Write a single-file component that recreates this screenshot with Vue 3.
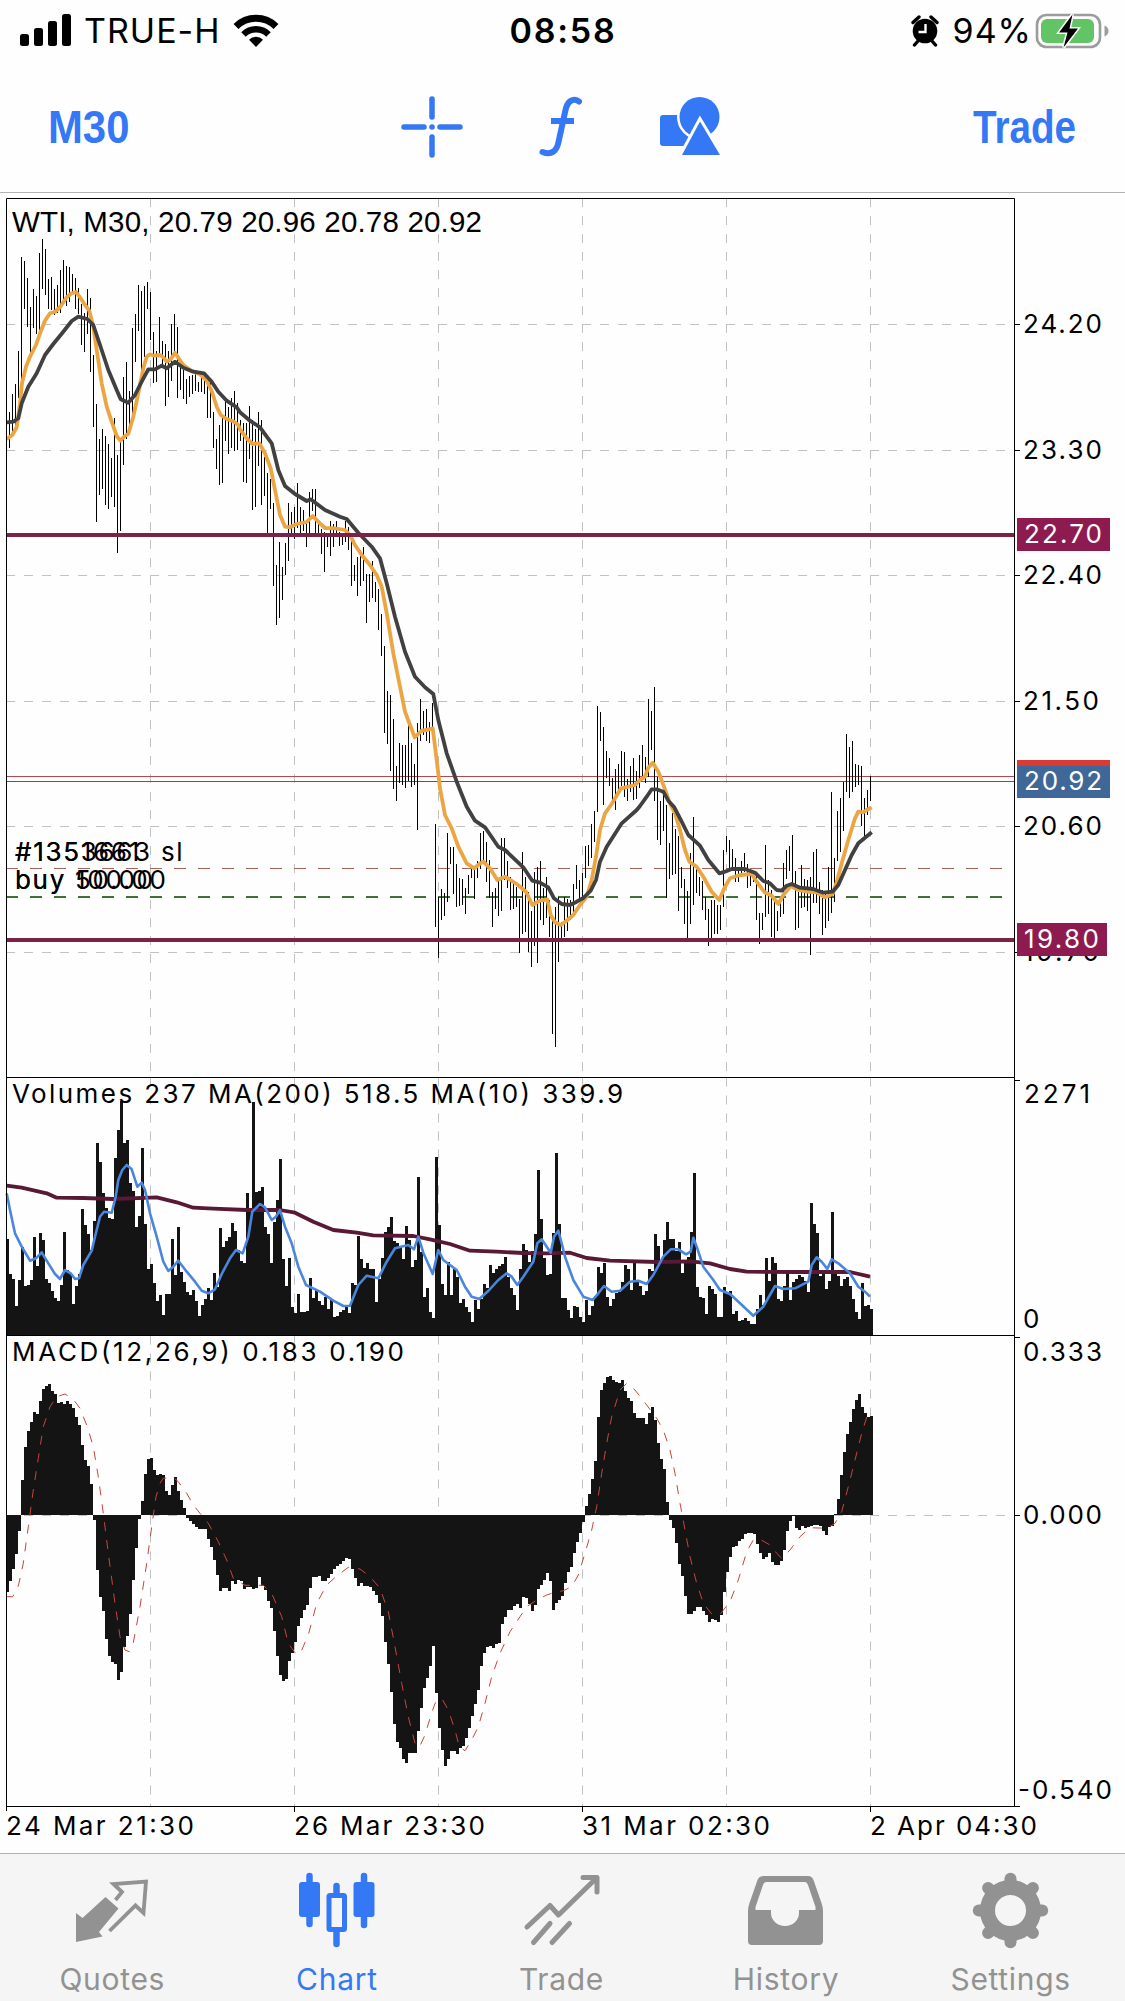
<template>
  <div class="screen">
    <!-- Status bar -->
    <div class="status-bar">
      <div class="status-left">
        <svg class="signal" width="52" height="34" viewBox="0 0 52 34">
          <rect x="0" y="20" width="9" height="12" rx="2.5" />
          <rect x="14" y="14" width="9" height="18" rx="2.5" />
          <rect x="28" y="7" width="9" height="25" rx="2.5" />
          <rect x="42" y="0" width="9" height="32" rx="2.5" />
        </svg>
        <span class="carrier">TRUE-H</span>
        <svg class="wifi" width="46" height="34" viewBox="0 0 46 34">
          <path d="M3 12.5a28.5 28.5 0 0 1 40 0" stroke-width="7" />
          <path d="M10.5 20.5a17.8 17.8 0 0 1 25 0" stroke-width="6.5" />
          <path class="solid" d="M23 33l-7-7.3a10 10 0 0 1 14 0z" />
        </svg>
      </div>
      <span class="clock">08:58</span>
      <div class="status-right">
        <svg class="alarm" width="28" height="32" viewBox="0 0 28 32">
          <circle cx="14" cy="16" r="12.3" />
          <path d="M2 7.5L8 2M26 7.5L20 2M7 26l-3.5 4M21 26l3.5 4" stroke="#000" stroke-width="3.4" stroke-linecap="round" />
          <path d="M14.5 9v8H7.5" fill="none" stroke="#fff" stroke-width="2.4" />
        </svg>
        <span class="percent">94%</span>
        <svg class="battery" width="74" height="36" viewBox="0 0 74 36">
          <rect x="2" y="2" width="63" height="32" rx="9.5" fill="none" stroke="#9c9c9c" stroke-width="2.6" />
          <rect x="6" y="6" width="53" height="24" rx="6" fill="#63c466" />
          <path d="M69.5 12.5v11q4-1.8 4-5.500t-4-5.500z" fill="#9c9c9c" />
          <path d="M37.500 1.500L24 19.500h8.500L28.500 34.500 43 15.500h-8.500z" fill="#000" stroke="#fff" stroke-width="3" paint-order="stroke" />
        </svg>
      </div>
    </div>

    <!-- Toolbar -->
    <div class="toolbar">
      <button class="tool-text period">M30</button>
      <div class="tools">
        <svg width="62" height="62" viewBox="0 0 62 62">
          <path d="M31 3v18M31 41v18M3 31h20M39 31h20M30.900 31h.2" fill="none" stroke="#3478f6" stroke-width="5.500" stroke-linecap="round" />
        </svg>
        <svg width="44" height="62" viewBox="0 0 44 62">
          <path d="M40 5.500C34 1.500 28.500 5 26.500 14L19.500 46C18 54 13 60 3.500 56" fill="none" stroke="#3478f6" stroke-width="6" stroke-linecap="round" />
          <path d="M12 25h23" stroke="#3478f6" stroke-width="6" />
        </svg>
        <svg width="62" height="62" viewBox="0 0 62 62">
          <rect x="1" y="19" width="33" height="31" rx="3" fill="#3478f6" />
          <circle cx="40.500" cy="21" r="20" fill="#3478f6" stroke="#fefefe" stroke-width="5" paint-order="stroke" />
          <path d="M41 25.500L61 59H23z" fill="#3478f6" stroke="#fefefe" stroke-width="6" paint-order="stroke" />
        </svg>
      </div>
      <button class="tool-text trade">Trade</button>
    </div>

    <!-- Chart: price, volumes and MACD windows -->
    <svg class="chart" width="1125" height="1660" viewBox="0 193 1125 1660">
      <g class="grid">
        <path v-for="y in gridY" :key="'h' + y" :d="`M6 ${y}.5H1014`" />
        <path v-for="x in gridX" :key="'v' + x" :d="`M${x}.5 198V1077M${x}.5 1077.500V1335M${x}.5 1335.500V1806`" />
        <path d="M6 1515.500H1014" />
      </g>

      <!-- price window -->
      <path class="level-ask" d="M6 776.500H1014" />
      <path class="level-bid" d="M6 781.500H1014" />
      <path class="level-sl" d="M6 868.500H1014" />
      <path class="level-order" d="M6 897H1014" />
      <path class="bars" :d="barPath" />
      <polyline class="ma-fast" :points="maFast" />
      <polyline class="ma-slow" :points="maSlow" />
      <path class="level" d="M6 535H1014M6 940H1014" />

      <!-- indicator windows -->
      <path class="columns" :d="volumePath" />
      <polyline class="vol-slow" :points="volSlow" />
      <polyline class="vol-fast" :points="volFast" />
      <path class="columns" :d="macdPath" />
      <polyline class="signal-line" :points="signal" />

      <path class="frame" d="M6.500 1811V198.500H1014.500V1806.500M6 1077.500H1014M6 1335.500H1014M6 1806.500H1020M1014 1080.500H1020M1014 1337.500H1020M1014 1515.500H1020" />
      <path v-for="y in gridY" :key="'t' + y" class="frame" :d="`M1014 ${y}.5H1020`" />
      <path v-for="x in [294, 582, 870]" :key="'d' + x" class="frame" :d="`M${x}.5 1806V1812`" />

      <text
        v-for="t in labels"
        :key="t.text + t.y"
        :class="t.cls"
        :x="t.x"
        :y="t.y"
        :textLength="t.w"
      >{{ t.text }}</text>

      <g v-for="t in tags" :key="t.text">
        <rect :x="1017" :y="t.top" :width="t.width" height="33" :fill="t.color" />
        <text class="tag" x="1024" :y="t.top + 25" :textLength="t.width - 15">{{ t.text }}</text>
      </g>
      <rect x="1017" y="760" width="93" height="6" fill="#d93a34" />
    </svg>

    <!-- Tab bar -->
    <div class="tab-bar">
      <div v-for="tab in tabs" :key="tab" class="tab" :class="{ active: tab === activeTab }" @click="activeTab = tab">
        <svg width="80" height="80" viewBox="0 0 80 80">
          <template v-if="tab === 'Quotes'">
            <path d="M43.500 30L50 22 41.500 14 74 11.500 71.500 43 63.500 35.500 37.500 61" fill="none" stroke="currentColor" stroke-width="3.800" />
            <path d="M33.500 27L46.500 38.500 27 62 30.500 66.500 4 72V43L10.500 48z" fill="currentColor" />
          </template>
          <template v-else-if="tab === 'Chart'">
            <path d="M12.500 6v48M67 6v49M39.500 16v8M39.500 62v12" fill="none" stroke="currentColor" stroke-width="6.500" stroke-linecap="round" />
            <rect x="2" y="12" width="21" height="35" rx="3" fill="currentColor" />
            <rect x="56.500" y="12" width="21" height="35" rx="3" fill="currentColor" />
            <rect x="32" y="25.500" width="15.500" height="34" rx="1" fill="none" stroke="currentColor" stroke-width="5" />
          </template>
          <template v-else-if="tab === 'Trade'">
            <path d="M6 57L29 35.500 37.500 45 75.500 8M62 7.500H76V22M29 53.500L12.500 72.500M48.500 53.500L31 72.500" fill="none" stroke="currentColor" stroke-width="5" stroke-linecap="round" stroke-linejoin="round" />
          </template>
          <template v-else-if="tab === 'History'">
            <path fill-rule="evenodd" d="M18 6H62Q66 6 67.500 10L75.500 33Q77 37 77 41V71Q77 75 73 75H6Q2 75 2 71V41Q2 37 3.500 33L11.500 10Q13 6 18 6zM20 12Q18 12 17 15L9.500 37V40H25V43a14 13 0 0 0 28 0V40H69.500V37L62 15Q61 12 59 12z" fill="currentColor" />
          </template>
          <template v-else>
            <circle cx="39.500" cy="40.500" r="23" fill="none" stroke="currentColor" stroke-width="15" />
            <path
              v-for="n in 8"
              :key="n"
              d="M39.500 12V8.800"
              :transform="`rotate(${n * 45} 39.500 40.500)`"
              stroke="currentColor"
              stroke-width="12"
              stroke-linecap="round"
            />
          </template>
        </svg>
        <span>{{ tab }}</span>
      </div>
    </div>
  </div>
</template>

<script setup>
import { ref } from 'vue';

const tabs = ['Quotes', 'Chart', 'Trade', 'History', 'Settings'];
const activeTab = ref('Chart');

const gridX = [150, 294, 438, 582, 726, 870];
const gridY = [324, 450, 575, 701, 826, 952];

const labels = [
  { text: 'WTI, M30, 20.79 20.96 20.78 20.92', x: 12, y: 231.5, w: 470, cls: 'title' },
  { text: '24.20', x: 1023, y: 333, w: 79 },
  { text: '23.30', x: 1023, y: 459, w: 79 },
  { text: '22.40', x: 1023, y: 584, w: 79 },
  { text: '21.50', x: 1023, y: 710, w: 76 },
  { text: '20.60', x: 1023, y: 835, w: 79 },
  { text: '19.70', x: 1023, y: 961, w: 76 },
  // two orders share the same level, so their captions run into each other
  { text: '#1353663 sl', x: 15, y: 861, cls: 'order' },
  { text: '#1351661', x: 15, y: 861, cls: 'order' },
  { text: 'buy 50.00', x: 15, y: 889, cls: 'order' },
  { text: 'buy 100.00', x: 15, y: 889, cls: 'order' },
  { text: 'Volumes 237 MA(200) 518.5 MA(10) 339.9', x: 12, y: 1103, w: 611 },
  { text: '2271', x: 1024, y: 1103, w: 66 },
  { text: '0', x: 1023, y: 1328, w: 16 },
  { text: 'MACD(12,26,9) 0.183 0.190', x: 12, y: 1361, w: 392 },
  { text: '0.333', x: 1023, y: 1361, w: 79 },
  { text: '0.000', x: 1023, y: 1524, w: 79 },
  { text: '-0.540', x: 1018, y: 1799, w: 94 },
  { text: '24 Mar 21:30', x: 6, y: 1835, w: 188 },
  { text: '26 Mar 23:30', x: 294, y: 1835, w: 191 },
  { text: '31 Mar 02:30', x: 582, y: 1835, w: 188 },
  { text: '2 Apr 04:30', x: 870, y: 1835, w: 167 },
];

const tags = [
  { text: '22.70', top: 518, width: 93, color: '#8e1b4f' },
  { text: '20.92', top: 765, width: 93, color: '#3f6797' },
  { text: '19.80', top: 923, width: 90, color: '#8e1b4f' },
];

// high, low of every half-hour bar, 3px apart
const ranges = [
  412,448, 394,435, 384,427, 351,398, 257,403, 261,309, 278,327, 307,355, 289,328, 296,334, 253,330, 239,289,
  249,295, 279,309, 277,310, 289,315, 285,313, 270,313, 260,302, 266,306, 267,302, 274,292, 278,309, 288,314,
  304,345, 313,352, 289,334, 298,372, 355,427, 404,522, 439,495, 429,489, 436,505, 444,509, 458,497, 418,507,
  455,553, 438,531, 377,465, 362,439, 391,433, 328,420, 314,362, 285,331, 291,372, 286,357, 282,309, 292,340,
  332,383, 351,382, 317,357, 341,367, 344,406, 351,397, 324,381, 314,353, 327,398, 366,390, 370,399, 379,404,
  376,397, 375,394, 373,391, 382,392, 373,392, 375,394, 377,418, 383,418, 412,448, 439,469, 425,485, 417,483,
  400,441, 407,454, 398,448, 391,451, 403,450, 420,441, 423,482, 423,483, 406,459, 420,510, 429,507, 412,466,
  420,505, 457,496, 473,533, 479,509, 503,586, 565,625, 542,618, 567,600, 543,575, 503,561, 512,535, 507,539,
  483,528, 507,534, 510,531, 522,547, 492,537, 489,511, 489,537, 520,533, 529,554, 532,572, 533,547, 521,556,
  524,547, 521,535, 532,546, 533,545, 521,542, 527,550, 537,586, 565,581, 557,596, 550,586, 547,581, 574,623,
  574,602, 561,598, 582,602, 589,630, 614,656, 646,733, 691,744, 695,771, 719,789, 766,801, 743,783, 745,785,
  745,788, 723,781, 743,787, 764,785, 723,830, 699,741, 711,735, 709,741, 722,743, 703,730, 824,927, 897,958,
  889,920, 893,916, 833,902, 847,864, 847,894, 864,907, 878,906, 879,905, 888,914, 875,894, 865,878, 868,899,
  861,878, 833,869, 831,862, 842,882, 860,898, 892,927, 888,909, 880,916, 838,911, 838,880, 861,888, 877,910,
  881,909, 887,907, 899,953, 852,934, 877,932, 892,952, 911,967, 872,946, 867,963, 861,920, 888,925, 877,918,
  900,937, 920,1034, 907,1047, 897,962, 922,942, 897,937, 899,931, 900,920, 884,912, 865,889, 880,900, 873,897,
  846,878, 845,866, 824,858, 811,842, 706,812, 712,741, 727,805, 751,778, 758,786, 778,800, 769,810, 764,790,
  751,786, 752,797, 779,801, 766,792, 758,800, 771,799, 755,788, 745,778, 757,783, 699,777, 711,750, 687,801,
  777,840, 801,845, 790,831, 805,898, 843,879, 813,875, 829,874, 836,911, 867,888, 879,924, 891,938, 853,924,
  817,905, 867,893, 877,896, 881,910, 897,920, 909,946, 900,938, 900,934, 905,934, 905,930, 850,907, 836,852,
  840,870, 849,867, 858,882, 867,882, 861,877, 853,872, 864,888, 870,886, 871,882, 873,920, 913,944, 913,930,
  845,917, 880,914, 890,937, 900,939, 911,931, 897,917, 863,914, 850,879, 846,871, 835,887, 871,930, 892,928,
  865,908, 879,907, 880,911, 877,955, 852,903, 849,903, 882,914, 890,935, 892,928, 867,921, 792,913, 858,902,
  811,861, 798,852, 782,831, 734,792, 747,798, 741,792, 764,787, 765,785, 766,826, 798,836, 790,815, 776,801,
];

// column ends are in thirds of a pixel from the window origin
const volumes = [
  507, 612, 627, 708, 630, 530, 648, 645, 630, 501, 588, 489, 510, 627, 640, 663, 684, 693, 645, 486,
  600, 612, 702, 648, 612, 417, 465, 492, 540, 453, 219, 276, 369, 413, 444, 447, 264, 180, 93, 219,
  210, 339, 362, 471, 438, 234, 462, 598, 583, 639, 693, 675, 735, 672, 672, 507, 615, 471, 606, 636,
  666, 675, 660, 693, 738, 705, 687, 654, 690, 609, 650, 474, 531, 513, 501, 459, 483, 540, 573, 579,
  369, 420, 96, 366, 363, 351, 471, 492, 579, 456, 390, 267, 567, 648, 564, 711, 729, 672, 726, 726,
  723, 624, 684, 660, 693, 705, 681, 717, 690, 741, 738, 726, 720, 705, 729, 639, 645, 498, 567, 594,
  579, 597, 597, 696, 627, 564, 486, 471, 441, 513, 519, 531, 567, 468, 510, 591, 570, 321, 546, 681,
  654, 726, 744, 261, 465, 642, 675, 576, 675, 597, 621, 699, 687, 711, 726, 756, 690, 717, 687, 642,
  654, 585, 609, 597, 588, 582, 561, 621, 654, 675, 720, 597, 522, 540, 576, 543, 492, 300, 447, 564,
  615, 612, 489, 249, 462, 684, 684, 720, 744, 708, 711, 741, 756, 690, 735, 708, 678, 591, 609, 579,
  681, 708, 687, 669, 666, 636, 585, 597, 660, 579, 630, 648, 675, 663, 597, 603, 492, 528, 573, 510,
  456, 507, 507, 543, 516, 609, 570, 560, 486, 309, 651, 681, 684, 732, 648, 657, 672, 741, 741, 651,
  672, 663, 732, 723, 753, 750, 744, 753, 762, 762, 717, 675, 705, 564, 633, 561, 579, 687, 693, 648,
  609, 690, 636, 627, 615, 621, 633, 666, 399, 462, 489, 618, 612, 657, 633, 426, 600, 618, 648, 627,
  621, 648, 687, 726, 747, 639, 708, 705, 717,
];

const macd = [
  787, 753, 717, 672, 603, 450, 351, 303, 276, 246, 252, 213, 177, 168, 162, 183, 192, 219, 216, 222,
  213, 222, 234, 261, 285, 345, 390, 408, 462, 570, 720, 801, 843, 926, 978, 996, 1002, 1050, 1026, 951,
  917, 852, 750, 654, 567, 513, 432, 387, 384, 420, 435, 432, 435, 483, 495, 465, 441, 483, 510, 534,
  564, 573, 582, 591, 597, 597, 597, 627, 651, 690, 735, 782, 774, 774, 782, 752, 762, 750, 752, 777,
  770, 770, 778, 774, 741, 768, 780, 813, 834, 902, 978, 1035, 1052, 1046, 993, 970, 936, 888, 864, 840,
  825, 774, 741, 741, 738, 753, 753, 744, 732, 717, 708, 702, 693, 684, 686, 717, 744, 768, 759, 768,
  768, 771, 783, 795, 819, 858, 936, 1002, 1086, 1182, 1236, 1254, 1286, 1299, 1269, 1269, 1269, 1203, 1134, 1074,
  1043, 1008, 948, 1089, 1194, 1260, 1307, 1287, 1263, 1263, 1272, 1254, 1248, 1224, 1194, 1158, 1122, 1080, 1008, 969,
  951, 948, 953, 942, 939, 882, 861, 840, 840, 828, 822, 834, 801, 804, 822, 843, 825, 777, 765, 750,
  729, 753, 840, 819, 810, 798, 759, 726, 711, 669, 636, 609, 576, 528, 492, 447, 393, 261, 180, 159,
  141, 138, 150, 156, 159, 150, 183, 204, 213, 249, 264, 264, 264, 282, 249, 231, 270, 339, 387, 417,
  516, 570, 594, 639, 702, 738, 798, 852, 852, 843, 831, 831, 843, 855, 876, 867, 870, 876, 855, 786,
  726, 681, 651, 648, 633, 627, 612, 609, 609, 612, 642, 669, 687, 681, 670, 696, 705, 705, 693, 660,
  603, 573, 558, 594, 600, 588, 594, 591, 588, 585, 585, 588, 603, 615, 591, 588, 552, 507, 435, 366,
  312, 276, 237, 210, 192, 231, 249, 261, 258,
];

let barPath = '';
for (let i = 0; i < ranges.length; i += 2) {
  barPath += `M${9.5 + (i / 2) * 3} ${ranges[i]}V${ranges[i + 1]}`;
}

// filled step outline between the column ends and the base line
const columns = (values, origin, base) =>
  `M6 ${base}` + values.map((v, i) => `V${Math.round(origin + v / 3)}H${9 + i * 3}`).join('') + `V${base}Z`;

const volumePath = columns(volumes, 1070, 1335);
const macdPath = columns(macd, 1330, 1515);

const trace = (x, y, points) => {
  const out = [];
  for (let i = 0; i < points.length; i += 2) {
    out.push(`${(x + points[i] / 3).toFixed(1)},${(y + points[i + 1] / 3).toFixed(1)}`);
  }
  return out.join(' ');
};

const maFast = [
  trace(0, 190, [
    20,748, 37,735, 50,712, 60,640, 66,580, 78,530, 90,500, 108,465, 120,430, 135,392, 150,370, 165,365, 180,352,
    200,322, 215,310, 228,306, 240,322, 255,345, 268,362, 280,410, 290,480, 305,580, 320,650, 335,695, 350,738,
    361,752, 372,740, 385,732, 400,680, 415,610, 430,535, 440,500, 450,493, 462,497, 480,495, 490,502, 500,515,
    512,508, 525,488, 535,503, 550,525, 575,543, 600,553, 620,572, 635,603, 650,650, 662,675, 680,687, 700,694,
    715,705,
  ]),
  trace(240, 400, [
    0,88, 20,115, 38,132, 58,130, 75,160, 92,205, 105,270, 120,345, 135,380, 150,382, 170,372, 200,366, 218,348,
    240,370, 255,384, 285,385, 315,390, 330,405, 345,435, 365,465, 390,495, 410,525, 425,560, 440,640, 460,760,
    480,860, 495,935, 510,975, 524,1012, 545,992, 560,990,
  ]),
  trace(420, 660, [
    38,205, 50,300, 60,385, 75,465, 95,505, 115,560, 140,610, 163,625, 178,612, 190,605, 210,625, 232,660, 255,650,
    290,672, 318,695, 337,735, 360,722, 382,718, 392,765, 405,787, 422,795, 440,782, 460,765, 480,735, 500,710,
    515,660, 528,590, 540,510, 555,460, 575,432, 603,385, 625,380, 645,375,
  ]),
  trace(640, 700, [
    0,240, 15,230, 25,203, 38,188, 55,215, 72,260, 90,310, 105,340, 120,390, 135,450, 148,485, 170,500, 190,530,
    215,575, 238,600, 255,560, 270,535, 300,525, 335,522, 350,545, 372,575, 395,587, 415,612, 430,585, 452,558,
    475,570, 500,575, 530,577, 555,592, 578,582, 592,540, 605,490, 625,420, 645,355, 655,335, 670,337, 680,330,
    695,322,
  ]),
].join(' ');

const maSlow = [
  trace(0, 190, [
    20,697, 40,695, 55,685, 65,640, 85,590, 110,550, 135,495, 160,462, 190,425, 215,393, 235,380, 262,387, 280,405,
    300,465, 325,540, 350,600, 362,628, 385,638, 405,615, 425,575, 445,538, 465,538, 485,527, 500,535, 525,515,
    550,533, 580,545, 612,550, 635,575, 655,605, 680,632, 710,652,
  ]),
  trace(240, 400, [
    0,37, 30,62, 60,82, 95,130, 115,210, 135,258, 165,282, 200,303, 212,298, 255,330, 300,350, 320,357, 355,398,
    395,440, 420,475, 440,550, 465,650, 495,755, 525,830, 555,862, 580,882, 595,960, 620,1060, 650,1145, 680,1220,
    705,1262, 735,1282, 775,1340, 795,1350, 850,1402,
  ]),
  trace(420, 660, [
    337,662, 360,668, 385,682, 402,715, 425,732, 450,735, 470,725, 490,714, 512,692, 528,660, 540,605, 560,560,
    605,490, 650,450,
  ]),
  trace(640, 700, [
    0,318, 20,290, 35,268, 50,268, 70,275, 85,302, 103,322, 125,365, 145,405, 180,437, 205,480, 238,520, 255,515,
    275,507, 315,507, 345,518, 370,543, 390,550, 410,570, 425,572, 440,557, 455,552, 480,563, 520,567, 550,578,
    578,575, 595,555, 615,510, 635,465, 655,430, 675,413, 695,397,
  ]),
].join(' ');

const volFast = [
  trace(0, 1070, [
    20,370, 30,420, 45,490, 65,530, 80,555, 90,572, 108,565, 125,547, 145,580, 165,612, 180,627, 195,600, 212,610,
    225,627, 237,625, 250,585, 275,542, 285,500, 300,440, 312,425, 335,428, 347,380, 355,330, 367,300, 380,285,
    395,298, 412,350, 425,338, 435,360, 450,430, 470,500, 490,575, 505,603, 520,590, 535,572, 560,605, 585,635,
    605,662, 625,670, 645,658, 665,612, 690,565, 708,540, 728,550, 745,500, 757,425, 780,402, 795,412, 815,450,
    828,440, 840,420, 855,470, 875,520, 895,590, 918,645, 960,665, 1000,692, 1030,708, 1050,707, 1075,645,
    1100,617, 1135,625, 1160,575, 1185,535, 1225,525, 1242,538, 1255,500, 1270,548,
  ]),
  trace(430, 1070, [
    8,612, 25,540, 40,570, 80,600, 105,650, 125,680, 148,687, 175,663, 205,630, 230,610, 245,620, 262,645, 280,620,
    310,575, 322,520, 335,508, 350,530, 362,548, 372,500, 385,482, 395,520, 405,560, 430,630, 460,680, 488,690,
    505,670, 522,648, 545,665, 570,662, 600,635, 625,632, 650,642, 670,615, 700,560, 722,538, 745,538, 768,553,
    782,545, 790,503, 800,530, 820,590, 850,630, 870,660, 900,672, 930,700, 970,737, 1000,710, 1035,648, 1060,657,
    1095,655, 1135,635, 1145,585, 1160,562, 1175,575, 1192,597, 1205,568, 1225,580, 1260,610, 1285,650, 1305,665,
    1320,680,
  ]),
].join(' ');

const volSlow = [
  trace(0, 1070, [
    20,347, 65,353, 140,370, 170,383, 250,384, 340,387, 470,382, 530,397, 580,413, 640,416, 740,420, 840,420,
    885,428, 940,455, 1000,480, 1070,488, 1120,496, 1240,498,
  ]),
  trace(430, 1070, [
    0,508, 60,522, 120,542, 200,545, 280,549, 350,550, 420,548, 470,564, 540,572, 680,576, 780,574, 840,580,
    900,597, 950,605, 1100,606, 1260,606, 1320,620,
  ]),
].join(' ');

const signal = [
  trace(0, 1330, [
    18,800, 38,800, 55,768, 70,700, 85,590, 100,480, 115,385, 130,290, 150,230, 170,200, 195,192, 220,208, 240,235,
    262,290, 280,350, 295,440, 310,550, 325,670, 345,820, 360,920, 375,960, 388,965, 400,938, 420,830, 440,700,
    455,590, 468,500, 480,460, 490,445, 520,442, 535,455, 560,490, 580,525, 600,550, 625,580, 655,635, 680,690,
    700,745, 735,766, 790,766, 815,790, 845,860, 865,940, 885,968, 900,972, 925,915, 950,820, 980,765, 1010,738,
    1045,712, 1080,717, 1110,740, 1140,775, 1165,845, 1185,950, 1205,1060, 1225,1160, 1245,1240, 1258,1252,
    1275,1215, 1290,1165, 1305,1120,
  ]),
  trace(430, 1330, [
    35,1105, 55,1140, 75,1200, 88,1250, 105,1262, 125,1230, 145,1190, 165,1120, 185,1040, 210,970, 240,905, 270,860,
    290,830, 320,810, 350,795, 375,787, 400,782, 425,770, 445,735, 465,670, 485,600, 500,530, 515,430, 530,340,
    545,260, 570,180, 590,160, 615,180, 650,225, 680,265, 700,300, 720,360, 735,430, 750,520, 765,600, 780,680,
    800,760, 820,820, 845,852, 870,853, 900,815, 925,750, 950,665, 970,630, 990,628, 1020,645, 1040,670, 1055,685,
    1080,660, 1110,620, 1140,593, 1190,595, 1215,580, 1235,545, 1255,470, 1275,390, 1295,310, 1310,262, 1325,250,
  ]),
].join(' ');
</script>

<style>
body {
  margin: 0;
  background: #fefefe;
}
</style>

<style scoped>
.screen {
  display: flex;
  flex-direction: column;
  width: 1125px;
  height: 2001px;
  overflow: hidden;
  background: #fefefe;
  color: #000;
  font-family: Inter, sans-serif;
}

/* Status bar */
.status-bar {
  display: grid;
  grid-template-columns: 1fr auto 1fr;
  align-items: center;
  height: 62px;
  padding: 0 16px 0 20px;
  font-size: 34px;
  line-height: 40px;
}

.status-left,
.status-right {
  display: flex;
  align-items: center;
}

.status-right {
  justify-content: flex-end;
}

.carrier {
  margin: 0 13px 0 12px;
  letter-spacing: 1px;
}

.wifi path {
  fill: none;
  stroke: #000;
}

.wifi .solid {
  fill: #000;
  stroke: none;
}

.clock {
  margin-right: 3px;
  font-weight: 600;
  letter-spacing: 1.8px;
}

.percent {
  margin: 0 3px 0 14px;
  letter-spacing: 1px;
}

/* Toolbar */
.toolbar {
  display: flex;
  align-items: center;
  justify-content: space-between;
  height: 130px;
  padding: 0 48px;
  border-bottom: 1px solid #b2b2b2;
}

.tool-text {
  width: 104px;
  padding: 0;
  border: none;
  background: none;
  color: #3478f6;
  font: bold 46px/52px "Liberation Sans", sans-serif;
  text-align: left;
}

.period {
  transform: scaleX(0.91);
  transform-origin: left;
}

.trade {
  transform: scaleX(0.84);
  transform-origin: left;
}

.tools {
  display: flex;
  align-items: center;
  gap: 76px;
  margin-right: 4px;
}

/* Chart */
.chart {
  display: block;
  flex: none;
}

.chart text {
  font-size: 26px;
  fill: #000;
}

.chart .title {
  font-family: "Liberation Sans", sans-serif;
  font-size: 29.5px;
}

.chart .order {
  letter-spacing: 1.7px;
}

.chart .tag {
  fill: #fff;
}

.grid path {
  stroke: #c2c2c2;
  stroke-dasharray: 9 9;
}

.frame {
  fill: none;
  stroke: #000;
}

.bars {
  stroke: #000;
}

.columns {
  fill: #141414;
}

.level {
  stroke: #7d2149;
  stroke-width: 4;
}

.level-ask {
  stroke: #b0494b;
}

.level-bid {
  stroke: #4d5c86;
}

.level-sl {
  stroke: #a8665c;
  stroke-dasharray: 12 12;
}

.level-order {
  stroke: #3d7434;
  stroke-width: 2;
  stroke-dasharray: 12 12;
}

.chart polyline {
  fill: none;
  stroke-linejoin: round;
}

.ma-fast {
  stroke: #eba643;
  stroke-width: 3.8;
}

.ma-slow {
  stroke: #414141;
  stroke-width: 3.8;
}

.vol-slow {
  stroke: #591835;
  stroke-width: 3.8;
}

.vol-fast {
  stroke: #4a87dc;
  stroke-width: 2.6;
}

.signal-line {
  stroke: #c8453c;
  stroke-width: 1;
  stroke-dasharray: 9 9;
}

/* Tab bar */
.tab-bar {
  display: flex;
  flex: 1;
  padding-right: 2px;
  border-top: 1px solid #b2b2b2;
  background: #f5f5f5;
}

.tab {
  display: flex;
  flex: 1;
  flex-direction: column;
  align-items: center;
  padding-top: 16px;
  color: #929292;
  font-size: 30px;
  line-height: 36px;
  letter-spacing: 0.7px;
}

.tab span {
  margin-top: 11px;
}

.tab.active {
  color: #3478f6;
}
</style>
